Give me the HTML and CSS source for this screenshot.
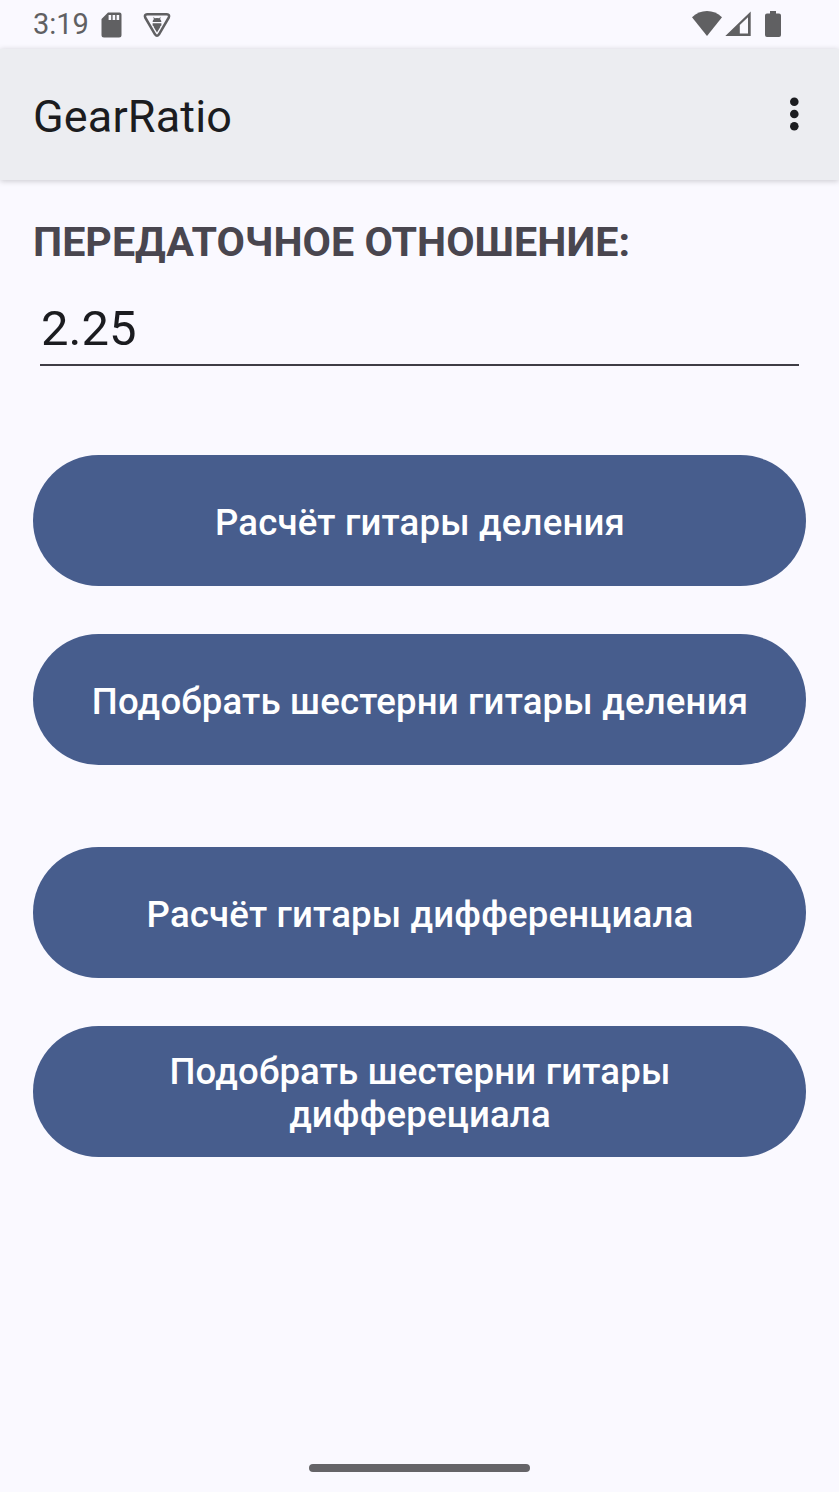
FILE: index.html
```html
<!DOCTYPE html>
<html lang="ru">
<head>
  <meta charset="UTF-8">
  <meta name="viewport" content="width=device-width, initial-scale=1.0">
  <title>GearRatio</title>
  <link rel="stylesheet" href="styles.css">
</head>
<body>

  <!-- Status bar -->
  <div class="status-bar">
    <span class="clock">3:19</span>
    <svg class="icon-sd" width="21" height="26" viewBox="0 0 21 26">
      <path fill="#606062" fill-rule="evenodd" d="M7 0.5H18.5Q20.5 0.5 20.5 2.5V23Q20.5 25.5 18 25.5H3Q0.5 25.5 0.5 23V7ZM7.6 3V8H10.2V3ZM11.6 3V8H14.2V3ZM15.6 3V8H18.2V3Z"/>
    </svg>
    <svg class="icon-badge" width="28" height="26" viewBox="0 0 28 26">
      <path fill="none" stroke="#606062" stroke-width="2.5" stroke-linejoin="round" d="M4.2 2.2H23.8Q27 2.5 25.8 5.5L16 22.3Q14 25 12 22.3L2.2 5.5Q1 2.5 4.2 2.2Z"/>
      <path fill="#606062" d="M10.4 4.8L11.8 6.3Q14 5.7 16.2 6.3L17.6 4.8L17.2 7.3Q18.4 8.4 18.4 10H9.6Q9.6 8.4 10.8 7.3ZM9.6 11.2H18.4V13.6L16.8 14.4H17.6L14 20.4L10.4 14.4H11.2L9.6 13.6Z"/>
    </svg>
    <div class="status-right">
      <svg width="30" height="25" viewBox="0 0 30 25">
        <path fill="#606062" d="M0 6.2Q6.5 0 15 0T30 6.2L15 25Z"/>
      </svg>
      <svg class="icon-signal" width="26" height="25" viewBox="0 0 26 25">
        <path fill="#606062" fill-rule="evenodd" d="M25.7 0.5V25H0.3ZM23 6.2L14.8 14V22.4H23Z"/>
      </svg>
      <svg class="icon-battery" width="16" height="26" viewBox="0 0 16 26">
        <path fill="#606062" d="M5 0H11V2.5H14Q16 2.5 16 4.5V24Q16 26 14 26H2Q0 26 0 24V4.5Q0 2.5 2 2.5H5Z"/>
      </svg>
    </div>
  </div>

  <!-- App bar -->
  <header class="app-bar">
    <h1 class="app-title">GearRatio</h1>
    <button class="menu-btn" aria-label="Меню">
      <svg width="10" height="34" viewBox="0 0 10 34">
        <circle cx="5.3" cy="4.8" r="4.3"/>
        <circle cx="5.3" cy="17" r="4.3"/>
        <circle cx="5.3" cy="29.2" r="4.3"/>
      </svg>
    </button>
  </header>

  <main class="content">
    <label class="ratio-label" for="ratio">ПЕРЕДАТОЧНОЕ ОТНОШЕНИЕ:</label>
    <input class="ratio-input" id="ratio" type="text" value="2.25">

    <div class="btn-group">
      <button class="btn">Расчёт гитары деления</button>
      <button class="btn">Подобрать шестерни гитары деления</button>
    </div>
    <div class="btn-group">
      <button class="btn">Расчёт гитары дифференциала</button>
      <button class="btn">Подобрать шестерни гитары дифферециала</button>
    </div>
  </main>

  <!-- Gesture bar -->
  <div class="nav-bar">
    <div class="nav-handle"></div>
  </div>

</body>
</html>
```

FILE: styles.css
```css
* {
  box-sizing: border-box;
}

body {
  margin: 0;
  height: 1492px;
  display: flex;
  flex-direction: column;
  background-color: #faf9ff;
  color: #1b1c20;
  font-family: Roboto, "Noto Sans", sans-serif;
  overflow: hidden;
}

svg {
  display: block;
}

/* Status bar */
.status-bar {
  display: flex;
  height: 49px;
  padding: 0 58px 0 33px;
}
.clock {
  width: 68px;
  color: #606062;
  font-size: 29px;
  line-height: 49px;
}
.icon-sd {
  margin-top: 12px;
}
.icon-badge {
  margin: 12px 0 0 21px;
}
.status-right {
  display: flex;
  margin: 11px 0 0 auto;
}
.icon-signal {
  margin-left: 3px;
}
.icon-battery {
  margin-left: 14px;
}

/* App bar */
.app-bar {
  display: flex;
  align-items: center;
  justify-content: space-between;
  height: 131px;
  padding: 0 40px 0 33px;
  background-color: #ecedf1;
  box-shadow: 0 1px 6px rgba(0, 0, 0, 0.2);
}
.app-title {
  margin: 4px 0 0;
  font-size: 45px;
  font-weight: 400;
  line-height: 53px;
  letter-spacing: 0.15px;
}
.menu-btn {
  margin-bottom: 2px;
  padding: 0;
  border: none;
  background: none;
  color: #1b1c20;
  fill: currentColor;
}

/* Content */
.content {
  flex: 1;
  display: flex;
  flex-direction: column;
  padding: 38px 33px 0;
}
.ratio-label {
  color: #49464f;
  font-size: 41.2px;
  font-weight: 700;
  line-height: 48px;
  letter-spacing: 0.03px;
}
.ratio-input {
  height: 73px;
  margin: 27px 7px 89px;
  padding: 0 0 0 1px;
  border: none;
  border-bottom: 2px solid #3f3d45;
  background: none;
  color: #1b1c20;
  font-family: inherit;
  font-size: 49px;
  outline: none;
}

/* Buttons */
.btn-group {
  display: flex;
  flex-direction: column;
  gap: 48px;
  margin-bottom: 82px;
}
.btn {
  height: 131px;
  padding: 3px 50px 0 51px;
  border: none;
  border-radius: 66px;
  background-color: #475d8d;
  color: #fff;
  font-family: inherit;
  font-size: 36.6px;
  font-weight: 500;
  line-height: 43px;
  letter-spacing: 0.17px;
}

/* Gesture bar */
.nav-bar {
  display: flex;
  justify-content: center;
  height: 28px;
}
.nav-handle {
  width: 221px;
  height: 8px;
  border-radius: 4px;
  background-color: #656468;
}
```
